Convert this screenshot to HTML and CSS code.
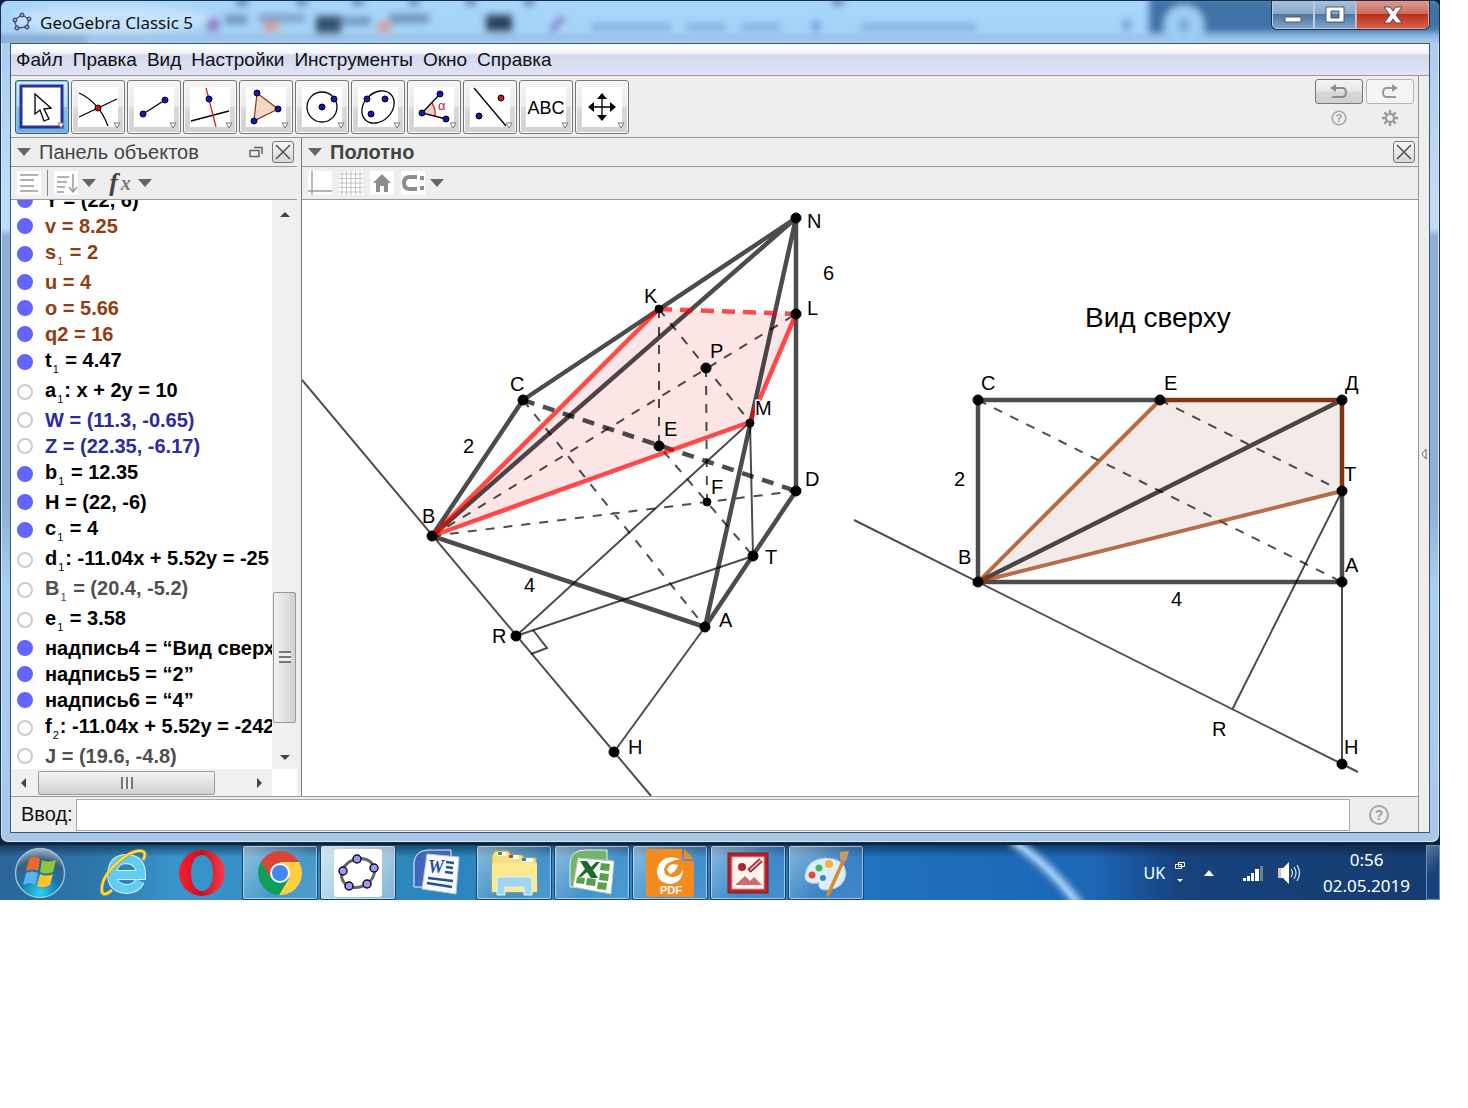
FILE: index.html
```html
<!DOCTYPE html>
<html lang="ru">
<head>
    <meta charset="UTF-8">
    <meta name="viewport" content="width=device-width, initial-scale=1.0">
    <title>GeoGebra Classic 5</title>
    <link rel="stylesheet" href="styles.css">
</head>
<body>
    <div class="desktop">
        <div class="window">
            <header class="titlebar">
                <!-- Blurred windows behind the glass -->
                <svg class="glass" viewBox="0 0 1438 42" preserveAspectRatio="none" aria-hidden="true">
                    <defs>
                        <filter id="soft" x="-20%" y="-50%" width="140%" height="200%"><feGaussianBlur stdDeviation="3.5"/></filter>
                        <linearGradient id="sky" x1="0" y1="0" x2="0" y2="1">
                            <stop offset="0" stop-color="#a9d6fb"/><stop offset="0.7" stop-color="#a5d3f8"/><stop offset="0.85" stop-color="#9fc4ea"/><stop offset="1" stop-color="#a6c8ec"/>
                        </linearGradient>
                    </defs>
                    <rect width="1438" height="42" fill="url(#sky)"/>
                    <g filter="url(#soft)">
                        <ellipse cx="110" cy="18" rx="100" ry="14" fill="#c4e2fb"/>
                        <rect x="-5" y="36" width="90" height="6" fill="#7d9fc5"/>
                        <rect x="1148" y="-4" width="300" height="36" fill="#3f72a8"/>
                        <circle cx="1183" cy="24" r="20" fill="#9dcdf5"/>
                        <ellipse cx="1183" cy="24" rx="5" ry="6" fill="#6c9fd0"/>
                        <ellipse cx="212" cy="24" rx="7" ry="7" fill="#8a7fc0"/>
                        <ellipse cx="270" cy="25" rx="8" ry="6" fill="#d69f9c"/>
                        <ellipse cx="383" cy="26" rx="7" ry="6" fill="#d69f9c"/>
                        <rect x="224" y="14" width="22" height="9" fill="#6f93b8"/>
                        <rect x="258" y="13" width="46" height="8" fill="#7fa1c2"/>
                        <rect x="315" y="15" width="25" height="17" fill="#35526f"/>
                        <rect x="340" y="16" width="30" height="8" fill="#6f93b8"/>
                        <rect x="388" y="13" width="40" height="9" fill="#6f93b8"/>
                        <rect x="485" y="14" width="26" height="16" fill="#2c435c"/>
                        <path d="M550 30l12-14" stroke="#7b78c4" stroke-width="5"/>
                        <path d="M590 26H670M685 26H725M740 26H780M860 26H975" stroke="#82afe0" stroke-width="7"/>
                        <ellipse cx="815" cy="25" rx="4" ry="6" fill="#6b96cf"/>
                        <ellipse cx="1126" cy="24" rx="4" ry="6" fill="#6b96cf"/>
                        <path d="M235 1h12M296 1h10M352 1h10M408 1h10M465 1h10M523 1h10M832 1h10" stroke="#4b72b0" stroke-width="6"/>
                    </g>
                </svg>
                <div class="title">
                    <svg width="20" height="20" viewBox="0 0 20 20" aria-hidden="true">
                        <path d="M10 3L17 7L15 15L5 16L2 8Z" fill="none" stroke="#555" stroke-width="1.3" stroke-linejoin="round"/>
                        <g fill="#9a9aff" stroke="#223" stroke-width="0.9"><circle cx="10" cy="3" r="2"/><circle cx="17" cy="7" r="2"/><circle cx="15" cy="15" r="2"/><circle cx="5" cy="16" r="2"/><circle cx="3" cy="8" r="2"/></g>
                    </svg>
                    <h1>GeoGebra Classic 5</h1>
                </div>
                <div class="window-buttons">
                    <button class="win-btn" aria-label="Свернуть"><svg width="20" height="18" viewBox="0 0 20 18"><rect x="2" y="11" width="16" height="5" rx="1" fill="#fff" stroke="#455870"/></svg></button>
                    <button class="win-btn" aria-label="Развернуть"><svg width="20" height="18" viewBox="0 0 20 18"><path d="M1 1h18v15H1zM6 5v7h8V5z" fill="#fff" fill-rule="evenodd" stroke="#455870"/></svg></button>
                    <button class="win-btn win-close" aria-label="Закрыть"><svg width="20" height="18" viewBox="0 0 20 18"><path d="M1 1h6l3 4 3-4h6l-6 8 6 8h-6l-3-4-3 4H1l6-8z" fill="#fff" stroke="#60424a"/></svg></button>
                </div>
            </header>

            <div class="client">
                <nav class="menubar">
                    <a href="#">Файл</a>
                    <a href="#">Правка</a>
                    <a href="#">Вид</a>
                    <a href="#">Настройки</a>
                    <a href="#">Инструменты</a>
                    <a href="#">Окно</a>
                    <a href="#">Справка</a>
                </nav>

                <div class="work">
                    <main class="main">
                        <div class="toolbar">
                            <div class="tools">
                                <button class="tool tool-active" aria-label="Перемещать"><svg viewBox="0 0 54 54"><rect x="6" y="6" width="41" height="41" fill="#fff" stroke="#28309c" stroke-width="3"/><path d="M20 14V34L25 30L29 41L34 39L29 29L36 28Z" fill="#fff" stroke="#000" stroke-width="1.3"/><path class="more" d="M43 43h6l-3 5z"/></svg></button>
                                <button class="tool" aria-label="Точка"><svg viewBox="0 0 54 54"><rect class="paper" x="7" y="7" width="40" height="40"/><path class="ink" d="M8 13Q28 22 37 46M8 37L46 19"/><circle class="red-dot" cx="27" cy="28" r="3"/><path class="more" d="M43 43h6l-3 5z"/></svg></button>
                                <button class="tool" aria-label="Отрезок"><svg viewBox="0 0 54 54"><rect class="paper" x="7" y="7" width="40" height="40"/><path class="ink" d="M16 34L38 20"/><circle class="blue-dot" cx="16" cy="34" r="3"/><circle class="blue-dot" cx="38" cy="20" r="3"/><path class="more" d="M43 43h6l-3 5z"/></svg></button>
                                <button class="tool" aria-label="Перпендикуляр"><svg viewBox="0 0 54 54"><rect class="paper" x="7" y="7" width="40" height="40"/><path class="ink" d="M8 41L46 31"/><path d="M23 8L33 47" stroke="#e02020" stroke-width="1.3"/><circle class="blue-dot" cx="26" cy="19" r="3"/><path class="more" d="M43 43h6l-3 5z"/></svg></button>
                                <button class="tool" aria-label="Многоугольник"><svg viewBox="0 0 54 54"><rect class="paper" x="7" y="7" width="40" height="40"/><path d="M18 13L39 29L15 41Z" fill="#f3d6c8" stroke="#993300" stroke-width="1.2"/><circle class="blue-dot" cx="18" cy="13" r="3"/><circle class="blue-dot" cx="39" cy="29" r="3"/><circle class="blue-dot" cx="15" cy="41" r="3"/><path class="more" d="M43 43h6l-3 5z"/></svg></button>
                                <button class="tool" aria-label="Окружность"><svg viewBox="0 0 54 54"><rect class="paper" x="7" y="7" width="40" height="40"/><circle class="ink" cx="27" cy="27" r="15"/><circle class="blue-dot" cx="27" cy="27" r="3"/><circle class="blue-dot" cx="39" cy="19" r="3"/><path class="more" d="M43 43h6l-3 5z"/></svg></button>
                                <button class="tool" aria-label="Эллипс"><svg viewBox="0 0 54 54"><rect class="paper" x="7" y="7" width="40" height="40"/><ellipse class="ink" cx="27" cy="27" rx="18" ry="14" transform="rotate(-45 27 27)"/><circle class="blue-dot" cx="16" cy="19" r="3"/><circle class="blue-dot" cx="34" cy="19" r="3"/><circle class="blue-dot" cx="20" cy="34" r="3"/><path class="more" d="M43 43h6l-3 5z"/></svg></button>
                                <button class="tool" aria-label="Угол"><svg viewBox="0 0 54 54"><rect class="paper" x="7" y="7" width="40" height="40"/><path d="M15 33L25 23Q29 29 28 37Z" fill="#f9cccc"/><path d="M25 23Q29 29 28 37" fill="none" stroke="#d01818" stroke-width="1.3"/><path class="ink" d="M33 14L15 33L39 39"/><circle class="blue-dot" cx="33" cy="14" r="3"/><circle class="blue-dot" cx="15" cy="33" r="3"/><circle class="blue-dot" cx="39" cy="39" r="3"/><text class="alpha" x="31" y="30">α</text><path class="more" d="M43 43h6l-3 5z"/></svg></button>
                                <button class="tool" aria-label="Отражение"><svg viewBox="0 0 54 54"><rect class="paper" x="7" y="7" width="40" height="40"/><path class="ink" d="M11 8L43 46"/><circle class="blue-dot" cx="16" cy="36" r="3"/><circle class="red-dot" cx="38" cy="18" r="3"/><path class="more" d="M43 43h6l-3 5z"/></svg></button>
                                <button class="tool" aria-label="Текст"><svg viewBox="0 0 54 54"><rect class="paper" x="7" y="7" width="40" height="40"/><text class="abc" x="27" y="34" text-anchor="middle">ABC</text><path class="more" d="M43 43h6l-3 5z"/></svg></button>
                                <button class="tool" aria-label="Переместить полотно"><svg viewBox="0 0 54 54"><rect class="paper" x="7" y="7" width="40" height="40"/><path class="ink" d="M27 16V38M16 27H38"/><path d="M27 13l5 6H22zM27 41l5-6H22zM13 27l6-5v10zM41 27l-6-5v10z"/><path class="more" d="M43 43h6l-3 5z"/></svg></button>
                            </div>
                            <div class="quick">
                                <button class="undo" aria-label="Отменить"><svg width="20" height="16" viewBox="0 0 20 16"><path d="M4 4H13Q17 4 17 8.5T13 13H3" fill="none" stroke="#8c8c8c" stroke-width="2"/><path d="M7 0V8L1 4z" fill="#8c8c8c"/></svg></button>
                                <button class="undo redo" aria-label="Вернуть"><svg width="20" height="16" viewBox="0 0 20 16"><path d="M15 4H7Q3 4 3 8.5T7 13H16" fill="none" stroke="#999" stroke-width="2"/><path d="M12 0V8L18 4z" fill="#999"/></svg></button>
                                <button class="plain" aria-label="Справка"><svg width="16" height="16" viewBox="0 0 20 20"><circle cx="10" cy="10" r="8.5" fill="none" stroke="#a6a6a6" stroke-width="2"/><text class="question" x="10" y="15" text-anchor="middle">?</text></svg></button>
                                <button class="plain" aria-label="Параметры"><svg width="16" height="16" viewBox="0 0 20 20"><g fill="none" stroke="#999"><circle cx="10" cy="10" r="5" stroke-width="2.5"/><path d="M10 0V4M10 16V20M0 10H4M16 10H20M3 3L6 6M14 14L17 17M3 17L6 14M14 6L17 3" stroke-width="3"/></g></svg></button>
                            </div>
                        </div>

                        <div class="views">
                            <section class="sidebar">
                                <div class="view-header">
                                    <span class="caret"></span>
                                    <h2 class="view-title">Панель объектов</h2>
                                    <button class="plain detach" aria-label="Открепить"><svg width="14" height="12" viewBox="0 0 14 12"><path d="M1 4.5h9v6H1zM5 1.5h8V8" fill="none" stroke="#666" stroke-width="1.5"/></svg></button>
                                    <button class="close" aria-label="Закрыть панель"><svg width="16" height="16" viewBox="0 0 16 16"><path d="M1 1L15 15M15 1L1 15" stroke="#555" stroke-width="1.6"/></svg></button>
                                </div>
                                <div class="stylebar">
                                    <button class="style-btn" aria-label="Вспомогательные объекты"><svg viewBox="0 0 24 24"><rect width="24" height="24" fill="#fff"/><path d="M3 4H21M3 9H17M3 15H17M3 20H21" stroke="#999" stroke-width="1.6"/></svg></button>
                                    <span class="divider"></span>
                                    <button class="style-btn" aria-label="Сортировка"><svg viewBox="0 0 24 24"><rect width="24" height="24" fill="#fff"/><path d="M3 6H15M3 11H13M3 16H11M3 21H10M19 3V20M15 16L19 21L23 16" fill="none" stroke="#999" stroke-width="1.5"/></svg></button>
                                    <span class="caret"></span>
                                    <button class="style-btn fx" aria-label="Описание"><i>f</i><i class="fx-small">x</i></button>
                                    <span class="caret"></span>
                                </div>
                                <div class="scroll-area">
                                    <div class="objects">
                                        <label class="object"><input type="checkbox" checked><span>Y = (22, 6)</span></label>
                                        <label class="object brown"><input type="checkbox" checked><span>v = 8.25</span></label>
                                        <label class="object indexed brown"><input type="checkbox" checked><span>s<sub>1</sub> = 2</span></label>
                                        <label class="object brown"><input type="checkbox" checked><span>u = 4</span></label>
                                        <label class="object brown"><input type="checkbox" checked><span>o = 5.66</span></label>
                                        <label class="object brown"><input type="checkbox" checked><span>q2 = 16</span></label>
                                        <label class="object indexed"><input type="checkbox" checked><span>t<sub>1</sub> = 4.47</span></label>
                                        <label class="object indexed"><input type="checkbox"><span>a<sub>1</sub>: x + 2y = 10</span></label>
                                        <label class="object blue"><input type="checkbox"><span>W = (11.3, -0.65)</span></label>
                                        <label class="object blue"><input type="checkbox"><span>Z = (22.35, -6.17)</span></label>
                                        <label class="object indexed"><input type="checkbox" checked><span>b<sub>1</sub> = 12.35</span></label>
                                        <label class="object"><input type="checkbox" checked><span>H = (22, -6)</span></label>
                                        <label class="object indexed"><input type="checkbox" checked><span>c<sub>1</sub> = 4</span></label>
                                        <label class="object indexed"><input type="checkbox"><span>d<sub>1</sub>: -11.04x + 5.52y = -25</span></label>
                                        <label class="object indexed gray"><input type="checkbox"><span>B<sub>1</sub> = (20.4, -5.2)</span></label>
                                        <label class="object indexed"><input type="checkbox"><span>e<sub>1</sub> = 3.58</span></label>
                                        <label class="object"><input type="checkbox" checked><span>надпись4 = “Вид сверху”</span></label>
                                        <label class="object"><input type="checkbox" checked><span>надпись5 = “2”</span></label>
                                        <label class="object"><input type="checkbox" checked><span>надпись6 = “4”</span></label>
                                        <label class="object indexed"><input type="checkbox"><span>f<sub>2</sub>: -11.04x + 5.52y = -242</span></label>
                                        <label class="object gray"><input type="checkbox"><span>J = (19.6, -4.8)</span></label>
                                    </div>
                                    <div class="scrollbar vertical">
                                        <span class="arrow up"></span>
                                        <span class="space-before"></span>
                                        <span class="thumb"><span class="grip"></span></span>
                                        <span class="space-after"></span>
                                        <span class="arrow down"></span>
                                    </div>
                                    <div class="scrollbar horizontal">
                                        <span class="arrow left"></span>
                                        <span class="thumb"><span class="grip"></span></span>
                                        <span class="space-after"></span>
                                        <span class="arrow right"></span>
                                    </div>
                                </div>
                            </section>

                            <section class="graphics">
                                <div class="view-header">
                                    <span class="caret"></span>
                                    <h2 class="view-title strong">Полотно</h2>
                                    <button class="close" aria-label="Закрыть полотно"><svg width="16" height="16" viewBox="0 0 16 16"><path d="M1 1L15 15M15 1L1 15" stroke="#555" stroke-width="1.6"/></svg></button>
                                </div>
                                <div class="stylebar">
                                    <button class="style-btn" aria-label="Оси"><svg viewBox="0 0 24 24"><rect width="24" height="24" fill="#fff"/><path d="M4 0V24M0 20H24" stroke="#999" stroke-width="1.3"/></svg></button>
                                    <button class="style-btn" aria-label="Сетка"><svg viewBox="0 0 24 24"><rect width="24" height="24" fill="#fff"/><path d="M3 0V24M7.500 0V24M12 0V24M16.500 0V24M21 0V24M0 3H24M0 7.500H24M0 12H24M0 16.500H24M0 21H24" stroke="#c4c4c4"/></svg></button>
                                    <button class="style-btn" aria-label="Исходный вид"><svg viewBox="0 0 24 24"><rect width="24" height="24" fill="#fff"/><path d="M12 3L21 12H18V21H14V15H10V21H6V12H3Z" fill="#8c8c8c"/></svg></button>
                                    <button class="style-btn" aria-label="Привязка"><svg viewBox="0 0 24 24"><rect width="24" height="24" fill="#fff"/><path d="M16 6H9Q3 6 3 12T9 18H16" fill="none" stroke="#8c8c8c" stroke-width="4"/><path d="M19 5h4v4h-4zM19 15h4v4h-4z" fill="#8c8c8c"/></svg></button>
                                    <span class="caret"></span>
                                </div>
                                <svg class="canvas" viewBox="302 200 1116 596" role="img" aria-label="Сечение пирамиды и вид сверху">
                                    <!-- Pyramid -->
                                    <path class="section" d="M432 536L659 309L796 314L750 422Z"/>
                                    <path class="thin" d="M302 380L651 796M516 636L750 422L753 556L516 636M705 627L614 752"/>
                                    <path class="thin" d="M533 630L547 648L531 654"/>
                                    <path class="dash" d="M659 309V446L753 556M659 309L750 422M432 536L796 314M706 368L707 502M523 400L705 627M432 536L796 491"/>
                                    <path class="thick-dash" d="M523 400L796 491"/>
                                    <path class="thick" d="M432 536L523 400L796 218L432 536L705 627L796 491V218L705 627"/>
                                    <path class="cut" d="M659 309L432 536L750 422L796 314"/>
                                    <path class="cut cut-dash" d="M659 309L796 314"/>
                                    <g class="points">
                                        <circle cx="796" cy="218" r="5"/><circle cx="796" cy="314" r="5"/><circle cx="659" cy="309" r="4"/>
                                        <circle cx="706" cy="368" r="5"/><circle cx="523" cy="400" r="5"/><circle cx="750" cy="423" r="4"/>
                                        <circle cx="659" cy="446" r="5"/><circle cx="796" cy="491" r="5"/><circle cx="707" cy="502" r="4"/>
                                        <circle cx="432" cy="536" r="5"/><circle cx="753" cy="556" r="5"/><circle cx="705" cy="627" r="5"/>
                                        <circle cx="516" cy="636" r="5"/><circle cx="614" cy="752" r="5"/>
                                    </g>
                                    <g class="names">
                                        <text x="807" y="228">N</text><text x="823" y="280">6</text><text x="644" y="303">K</text>
                                        <text x="807" y="315">L</text><text x="710" y="358">P</text><text x="510" y="391">C</text>
                                        <text class="halo" x="755" y="415">M</text><text x="463" y="453">2</text><text x="664" y="436">E</text>
                                        <text x="805" y="486">D</text><text x="711" y="494">F</text><text x="422" y="523">B</text>
                                        <text x="765" y="564">T</text><text x="524" y="592">4</text><text x="719" y="627">A</text>
                                        <text x="492" y="643">R</text><text x="628" y="754">H</text>
                                    </g>

                                    <!-- Top view -->
                                    <text class="caption" x="1085" y="327">Вид сверху</text>
                                    <path class="base" d="M978 582L1160 400H1342V491Z"/>
                                    <path class="thin" d="M854 520L1358 772M1342 491L1232 710M1342 582V764"/>
                                    <path class="dash" d="M978 400L1342 582M1160 400L1342 491"/>
                                    <path class="thick" d="M978 582V400H1342V582H978L1342 400"/>
                                    <path class="brown-line" d="M1160 400L978 582L1342 491"/>
                                    <path class="brown-dark" d="M1160 400H1342V491"/>
                                    <g class="points">
                                        <circle cx="978" cy="400" r="5"/><circle cx="1160" cy="400" r="5"/><circle cx="1342" cy="400" r="5"/>
                                        <circle cx="1342" cy="491" r="5"/><circle cx="978" cy="582" r="5"/><circle cx="1342" cy="582" r="5"/>
                                        <circle cx="1342" cy="764" r="5"/>
                                    </g>
                                    <g class="names">
                                        <text x="981" y="390">С</text><text x="1164" y="390">E</text><text x="1345" y="390">Д</text>
                                        <text x="954" y="486">2</text><text x="1344" y="481">T</text><text x="958" y="564">B</text>
                                        <text x="1345" y="572">A</text><text x="1171" y="606">4</text><text x="1212" y="736">R</text>
                                        <text x="1344" y="754">H</text>
                                    </g>
                                </svg>
                            </section>
                        </div>

                        <form class="inputbar">
                            <label for="command">Ввод:</label>
                            <input id="command" type="text">
                            <button class="plain" type="button" aria-label="Справка по вводу"><svg width="20" height="20" viewBox="0 0 20 20"><circle cx="10" cy="10" r="9" fill="none" stroke="#a6a6a6" stroke-width="2"/><text class="question" x="10" y="15" text-anchor="middle">?</text></svg></button>
                        </form>
                    </main>
                    <button class="perspectives" aria-label="Перспективы"><svg width="6" height="12" viewBox="0 0 6 12"><path d="M5 1V11L1 6Z" fill="#fff" stroke="#666"/></svg></button>
                </div>
            </div>
        </div>

        <footer class="taskbar">
            <svg class="streak" viewBox="0 0 1440 56" preserveAspectRatio="none" aria-hidden="true"><path d="M1012 -4Q1048 18 1080 62" fill="none" stroke="#a8d0f6" stroke-width="9" filter="url(#soft)"/><path d="M1018 0Q1048 20 1076 58" fill="none" stroke="#9cc9f5" stroke-width="4" opacity="0.6"/></svg>
            <button class="start" aria-label="Пуск">
                <svg width="52" height="52" viewBox="0 0 52 52">
                    <defs><radialGradient id="orb" cx="0.5" cy="0.9" r="0.9"><stop offset="0" stop-color="#28d2f4"/><stop offset="0.45" stop-color="#1674ad"/><stop offset="0.75" stop-color="#3d607c"/><stop offset="1" stop-color="#a4b8c6"/></radialGradient></defs>
                    <circle cx="26" cy="26" r="24.5" fill="url(#orb)" stroke="#8fc2de" stroke-width="1.5"/>
                    <path d="M15 12Q21 8 26 12L24 24Q19 21 12 24Z" fill="#ee6a2c"/>
                    <path d="M28 13Q34 16 42 13L39 25Q32 28 26 25Z" fill="#8dc63f"/>
                    <path d="M12 26Q18 23 24 26L21 38Q16 34 9 38Z" fill="#5fb2ec"/>
                    <path d="M26 27Q32 30 39 27L36 38Q29 42 23 39Z" fill="#fdc22d"/>
                </svg>
            </button>
            <div class="apps">
                <button class="app" aria-label="Internet Explorer">
                    <svg width="48" height="48" viewBox="0 0 48 48"><path d="M40 32Q36 40 27 40Q12 39 12 25Q13 10 27 10Q41 11 41 26H16" fill="none" stroke="#d4f5ff" stroke-width="10"/><path d="M40 32Q36 40 27 40Q12 39 12 25Q13 10 27 10Q41 11 41 26H16" fill="none" stroke="#62cdf3" stroke-width="8"/><path d="M12 41Q4 48 2 43Q0 29 18 13Q36 -2 44 3Q46 6 43 11" fill="none" stroke="#d5a51c" stroke-width="3.5"/><path d="M12 41Q4 48 2 43Q0 29 18 13Q36 -2 44 3Q46 6 43 11" fill="none" stroke="#ffe04b" stroke-width="2"/></svg>
                </button>
                <button class="app" aria-label="Opera">
                    <svg width="48" height="48" viewBox="0 0 48 48"><defs><linearGradient id="opera"><stop offset="0" stop-color="#ff1b2d"/><stop offset="0.5" stop-color="#c4121f"/><stop offset="1" stop-color="#fa3d48"/></linearGradient></defs><path d="M24 1A23 23 0 1 0 24 47A23 23 0 1 0 24 1ZM24 6C31 6 35 14 35 24S31 42 24 42S13 34 13 24S17 6 24 6Z" fill="url(#opera)" fill-rule="evenodd"/></svg>
                </button>
                <button class="app open" aria-label="Google Chrome">
                    <svg width="48" height="48" viewBox="0 0 48 48"><path d="M5 13A22 22 0 0 1 43 13H24L14 30Z" fill="#db4437"/><path d="M43 13A22 22 0 0 1 23 46L33 29L24 13Z" fill="#ffcd40"/><path d="M5 13A22 22 0 0 0 23 46L33 29H15Z" fill="#0f9d58"/><circle cx="24" cy="24" r="10" fill="#fff"/><circle cx="24" cy="24" r="8" fill="#4285f4"/></svg>
                </button>
                <button class="app open current" aria-label="GeoGebra">
                    <svg width="48" height="48" viewBox="0 0 48 48"><rect width="48" height="48" rx="3" fill="#fff"/><ellipse cx="24" cy="24" rx="17" ry="14" fill="none" stroke="#666" stroke-width="3" transform="rotate(-25 24 24)"/><g fill="#9999ff" stroke="#111" stroke-width="1.5"><circle cx="23" cy="10" r="4"/><circle cx="40" cy="19" r="4"/><circle cx="33" cy="35" r="4"/><circle cx="15" cy="37" r="4"/><circle cx="9" cy="22" r="4"/></g></svg>
                </button>
                <button class="app" aria-label="Word">
                    <svg width="48" height="48" viewBox="0 0 48 48"><path d="M2 38V14Q3 1 17 1H39V38Z" fill="#3f68bb" stroke="#e8f1fb"/><path d="M15 5L47 8L44 45L10 40Z" fill="#f8fbff" stroke="#b5c6df"/><text class="word" x="16" y="24">W</text><path d="M34 13l8 1M34 18l7 1M33 23l8 1M16 29l25 3M15 34l25 4" stroke="#27509b" stroke-width="2.5"/></svg>
                </button>
                <button class="app open" aria-label="Проводник">
                    <svg width="48" height="48" viewBox="0 0 48 48"><path d="M2 43V7L5 2H18L21 6H32L34 9H46L47 43Z" fill="#f5df83" stroke="#caa642"/><path d="M7 3h9v4H7zM19 6h10v4H19zM32 9h11v4H32z" fill="#fff"/><path d="M8 3h4v3H8z" fill="#4a9a3e"/><path d="M19 6h4v3h-4z" fill="#c93c36"/><path d="M32 9h4v3h-4z" fill="#2c83c4"/><path d="M2 14H47V43H2Z" fill="#fbe88f"/><path d="M7 46V30Q7 28 10 28H39Q42 28 42 30V46H34V38H15V46Z" fill="#a2d6ef" stroke="#e3f6ff"/></svg>
                </button>
                <button class="app open" aria-label="Excel">
                    <svg width="48" height="48" viewBox="0 0 48 48"><path d="M2 38V14Q3 1 17 1H39V38Z" fill="#78b36b" stroke="#e6f5e2"/><path d="M10 9L46 12L43 45L5 38Z" fill="#fbfff9" stroke="#b6cfae"/><path d="M33 14l9 1-1 7-9-1zM32 24l9 1-1 7-9-1zM9 28l8 1-1 6-8-1zM19 29l9 1-1 7-9-1zM30 33l9 1-1 7-9-1z" fill="#5b9f4c"/><path d="M12 12h7l4 6 5-5h4l-7 8 5 8h-7l-4-6-6 5h-3l7-8z" fill="#1d6a2c"/></svg>
                </button>
                <button class="app open" aria-label="Foxit PDF">
                    <svg width="48" height="48" viewBox="0 0 48 48"><path d="M0 0H36V12H48V48H0Z" fill="#f58a1f"/><path d="M38 0L48 10H38Z" fill="#f58a1f"/><path d="M34 10Q16 4 11 20Q10 34 25 35Q37 33 37 20Q34 28 27 28Q18 28 18 20Q20 12 34 10Z" fill="#fff"/><path d="M21 21Q23 13 32 16Q30 23 24 25Z" fill="#fff"/><text class="pdf" x="25" y="45" text-anchor="middle">PDF</text></svg>
                </button>
                <button class="app open" aria-label="Picture Manager">
                    <svg width="48" height="48" viewBox="0 0 48 48"><rect x="4" y="4" width="40" height="40" fill="#b3242c" stroke="#861820"/><rect x="8" y="8" width="32" height="32" fill="#fff4f0" stroke="#e59595"/><circle cx="18" cy="18" r="4" fill="#b3242c"/><path d="M11 36L21 27L26 32L30 28L38 36Z" fill="#cc6d6c"/><path d="M25 22L37 11" stroke="#982029" stroke-width="5"/><path d="M26 21L37 11" stroke="#e6a3a0" stroke-width="2"/></svg>
                </button>
                <button class="app open" aria-label="Paint">
                    <svg width="48" height="48" viewBox="0 0 48 48"><path d="M3 26Q5 10 23 9Q43 9 44 24Q43 39 26 41Q15 42 17 34Q7 36 3 30Z" fill="#dceef8" stroke="#9cc6de"/><circle cx="10" cy="26" r="3.5" fill="#df4a3c"/><circle cx="17" cy="19" r="3.5" fill="#4cb85a"/><circle cx="27" cy="15" r="4" fill="#f4b13d"/><circle cx="21" cy="29" r="3" fill="#3687c5"/><path d="M42 10L26 46" stroke="#d98a35" stroke-width="3.5" stroke-linecap="round"/><path d="M38 3L47 2L44 12L38 11Z" fill="#c79a63"/></svg>
                </button>
            </div>
            <div class="tray">
                <span class="lang">UK</span>
                <svg width="10" height="24" viewBox="0 0 10 24"><path d="M3.5 1.5h6v4h-6zM0.5 3.5h6v4h-6z" fill="none" stroke="#fff"/><path d="M2 18h6l-3 3z" fill="#fff"/></svg>
                <button class="plain tray-up" aria-label="Скрытые значки"><svg width="12" height="8" viewBox="0 0 12 8"><path d="M6 1L11 7H1Z" fill="#fff"/></svg></button>
                <svg class="signal" width="20" height="18" viewBox="0 0 20 18"><path d="M0 14h3v3H0zM4 12h3v5H4zM8 9h3v8H8zM12 5h4v12h-4z" fill="#fff"/><path d="M17 2h3v15h-3z" fill="#6b7f96"/></svg>
                <svg width="24" height="24" viewBox="0 0 24 24"><path d="M1 7H6L12 1V23L6 17H1Z" fill="#fff"/><path d="M1 7h3v10H1z" fill="#d8c3ad"/><path d="M14 8Q17 12 14 16M17 6Q21 12 17 18M20 4Q25 12 20 20" fill="none" stroke="#dce8f5" stroke-width="1.2"/></svg>
                <time class="clock" datetime="2019-05-02T00:56"><span>0:56</span><span>02.05.2019</span></time>
                <button class="show-desktop" aria-label="Показать рабочий стол"></button>
            </div>
        </footer>
    </div>
</body>
</html>
```

FILE: styles.css
```css
* {
    box-sizing: border-box;
}

body {
    margin: 0;
    background: #fff;
    font-family: "Liberation Sans", Arial, sans-serif;
    font-size: 20px;
    color: #111;
}

button {
    padding: 0;
    font: inherit;
    cursor: pointer;
}

svg {
    display: block;
}

.desktop {
    margin-right: 28px;
    background: #0e2238;
}

/* Window frame */
.window {
    position: relative;
    padding: 0 9px 9px;
    border: 1px solid #1b2f4a;
    border-radius: 8px;
    background: linear-gradient(#a6c8ec, #bfdcf7 22%, #bfdcf7 27%, #8fb0d8 28%, #8fb0d8 60%, #a9cff2 70%, #a8c8ea);
    box-shadow: inset 0 0 0 1px #d5e8fa;
    overflow: hidden;
}

.titlebar {
    display: flex;
    justify-content: space-between;
    align-items: flex-start;
    height: 42px;
}

.glass {
    position: absolute;
    top: 0;
    left: 0;
    width: 100%;
    height: 42px;
}

.title {
    position: relative;
    display: flex;
    align-items: center;
    gap: 8px;
    height: 42px;
    padding-left: 2px;
}

.title h1 {
    margin: 0;
    font-family: "Noto Sans", sans-serif;
    font-size: 17px;
    font-weight: 400;
}

.window-buttons {
    position: relative;
    display: flex;
    border: 1px solid #1d2f49;
    border-top: 0;
    border-radius: 0 0 6px 6px;
    overflow: hidden;
}

.win-btn {
    display: grid;
    place-items: center;
    width: 42px;
    height: 28px;
    border: 1px solid #b9cde4;
    border-top: 0;
    background: linear-gradient(#a9bfd8, #8ba8c8 48%, #4f749f 50%, #7fa3cb);
}

.win-close {
    width: 73px;
    border-color: #e2a69c;
    background: linear-gradient(#dc9a8f, #cc6a5c 48%, #b9301d 50%, #d8604a);
}

.client {
    border: 1px solid #43566f;
    background: #eee;
}

.menubar {
    display: flex;
    align-items: center;
    gap: 10px;
    height: 32px;
    padding-left: 5px;
    border-bottom: 1px solid #9a9a9a;
    background: linear-gradient(#fff, #f4f6fb 28%, #d3daee 36%, #e2e4f6);
    font-size: 19px;
}

.menubar a {
    color: #111;
    text-decoration: none;
}

.work {
    display: flex;
}

.main {
    flex: 1;
    min-width: 0;
}

/* Toolbar */
.toolbar {
    display: flex;
    justify-content: space-between;
    padding: 3px 4px;
    height: 62px;
    border-bottom: 1px solid #999;
}

.tools {
    display: flex;
    align-items: center;
    gap: 2px;
}

.tool {
    width: 54px;
    height: 54px;
    border: 1px solid #777;
    border-radius: 3px;
    background: linear-gradient(#f4f4f4, #ebebeb 49%, #dadada 51%, #d2d2d2);
    box-shadow: inset 0 0 0 1px #fafafa;
}

.tool svg {
    width: 54px;
    height: 54px;
    margin: -1px;
}

.tool-active {
    border-color: #2c628b;
    background: linear-gradient(#d5edfa, #b5dcf3 49%, #87c0e4 51%, #6cb0dc);
    box-shadow: inset 0 0 0 1px #8fc3e3;
}

.paper {
    fill: #fff;
}

.ink {
    fill: none;
    stroke: #000;
    stroke-width: 1.3px;
}

.blue-dot {
    fill: #1515c0;
    stroke: #000;
}

.red-dot {
    fill: #d01010;
    stroke: #000;
}

.more {
    fill: #fff;
    stroke: #777;
}

.abc {
    font-size: 18px;
}

.alpha {
    font-size: 13px;
    fill: #d01818;
}

.question {
    font-size: 14px;
    font-weight: 700;
    fill: #a0a0a0;
}

.quick {
    display: grid;
    grid-template-columns: 48px 48px;
    grid-template-rows: 25px 24px;
    gap: 2px 3px;
}

.undo {
    display: grid;
    place-items: center;
    border: 1px solid #777;
    border-radius: 3px;
    background: linear-gradient(#f4f4f4, #e8e8e8 49%, #d8d8d8 51%, #d0d0d0);
}

.redo {
    border-color: #b5b5b5;
    background: #f4f4f4;
}

.plain {
    display: grid;
    place-items: center;
    border: 0;
    background: none;
}

/* Views */
.views {
    display: flex;
}

.sidebar {
    flex: none;
    width: 286px;
    margin-right: 4px;
}

.graphics {
    flex: 1;
    min-width: 0;
    border-left: 1px solid #777;
}

.view-header {
    display: flex;
    align-items: center;
    height: 29px;
    padding: 0 3px 0 6px;
    border-bottom: 1px solid #999;
}

.view-title {
    flex: 1;
    margin: 0 0 0 8px;
    font-size: 20px;
    font-weight: 400;
    color: #444;
}

.strong {
    font-weight: 700;
}

.caret {
    border: 7px solid transparent;
    border-top: 8px solid #666;
    border-bottom: 0;
}

.detach {
    margin-right: 9px;
}

.close {
    display: grid;
    place-items: center;
    width: 22px;
    height: 22px;
    border: 1px solid #777;
    border-radius: 3px;
    background: linear-gradient(#f6f6f6, #d8d8d8);
}

.stylebar {
    display: flex;
    align-items: center;
    gap: 6px;
    height: 33px;
    padding: 0 6px;
    border-bottom: 1px solid #999;
}

.graphics .stylebar {
    gap: 7px;
}

.stylebar .caret {
    margin-left: -2px;
}

.style-btn {
    width: 24px;
    height: 24px;
    border: 0;
    background: none;
}

.fx {
    display: flex;
    align-items: center;
    justify-content: center;
    gap: 3px;
    margin: 0 2px 0 6px;
    font-family: "Liberation Serif", serif;
    font-size: 26px;
    font-weight: 700;
    line-height: 24px;
    color: #444;
}

.fx-small {
    font-size: 20px;
    color: #777;
}

.divider {
    width: 1px;
    height: 26px;
    background: #888;
}

/* Object list */
.scroll-area {
    display: grid;
    grid-template-columns: 1fr 25px;
    grid-template-rows: 569px 27px;
    background: #fff;
}

.objects {
    display: flex;
    flex-direction: column;
    justify-content: flex-end;
    overflow: hidden;
}

.object {
    display: flex;
    flex: none;
    align-items: center;
    gap: 12px;
    height: 26px;
    padding-left: 6px;
    font-weight: 700;
    line-height: 26px;
    color: #000;
    white-space: nowrap;
}

.indexed {
    height: 30px;
}

.indexed span {
    padding-bottom: 4px;
}

.object sub {
    padding: 0 1px;
    font-size: 11px;
    font-weight: 400;
    line-height: 0;
    vertical-align: -6px;
}

.object input {
    flex: none;
    appearance: none;
    width: 16px;
    height: 16px;
    margin: 0;
    border: 2px solid #ccc;
    border-radius: 50%;
    background: #fff;
}

.object input:checked {
    border-color: #6464ff;
    background: #6464ff;
}

.brown {
    color: #933c10;
}

.blue {
    color: #2b2b9e;
}

.gray {
    color: #505050;
}

.scrollbar {
    display: flex;
    align-items: center;
    background: #f0f0f0;
}

.vertical {
    flex-direction: column;
    padding: 12px 0 9px;
}

.horizontal {
    padding: 0 10px;
}

.thumb {
    display: grid;
    place-items: center;
    border: 1px solid #999;
    border-radius: 2px;
}

.vertical .thumb {
    width: 23px;
    height: 131px;
    background: linear-gradient(90deg, #f3f3f3, #e2e2e2 49%, #d0d0d0);
}

.horizontal .thumb {
    width: 177px;
    height: 24px;
    margin-left: 12px;
    background: linear-gradient(#f3f3f3, #e2e2e2 49%, #d0d0d0);
}

.grip {
    width: 12px;
    height: 12px;
}

.vertical .grip {
    background: repeating-linear-gradient(#777 0 2px, #eee 2px 5px);
}

.horizontal .grip {
    background: repeating-linear-gradient(90deg, #777 0 2px, #eee 2px 5px);
}

.space-before {
    flex: 370;
}

.space-after {
    flex: 32;
}

.arrow {
    border: 5px solid transparent;
}

.up {
    border-top: 0;
    border-bottom-color: #444;
}

.down {
    border-bottom: 0;
    border-top-color: #444;
}

.left {
    border-left: 0;
    border-right-color: #444;
}

.right {
    border-right: 0;
    border-left-color: #444;
}

/* Drawing */
.canvas {
    width: 100%;
    height: auto;
    background: #fff;
}

.section {
    fill: #fde5e6;
}

.base {
    fill: #f4ebe8;
}

.thin,
.dash,
.thick,
.thick-dash,
.cut,
.brown-line,
.brown-dark {
    fill: none;
    stroke: #000;
    stroke-opacity: 0.7;
    stroke-width: 2px;
}

.dash {
    stroke-dasharray: 9 9;
}

.thick,
.thick-dash {
    stroke-width: 4.5px;
    stroke-linejoin: round;
}

.thick-dash {
    stroke-dasharray: 12 9;
}

.cut {
    stroke: #f00;
    stroke-width: 4.5px;
}

.cut-dash {
    stroke-dasharray: 13 8;
}

.brown-line,
.brown-dark {
    stroke: #993300;
    stroke-width: 4px;
}

.brown-dark {
    stroke: #8a3208;
    stroke-opacity: 0.9;
}

.points {
    fill: #000;
    stroke: #000;
}

.names {
    font-size: 20px;
}

.halo {
    stroke: #fff;
    stroke-width: 3px;
    paint-order: stroke;
}

.caption {
    font-size: 28px;
}

/* Input line */
.inputbar {
    display: flex;
    align-items: center;
    height: 36px;
    padding: 0 11px 0 10px;
    border-top: 1px solid #999;
}

.inputbar label {
    width: 55px;
}

.inputbar input {
    flex: 1;
    min-width: 0;
    height: 32px;
    border: 1px solid #aaa;
    background: #fff;
    font: inherit;
}

.inputbar .plain {
    width: 57px;
}

.perspectives {
    display: grid;
    place-items: center;
    width: 11px;
    border: 0;
    border-left: 1px solid #999;
    background: #eee;
}

/* Taskbar */
.taskbar {
    position: relative;
    display: flex;
    height: 57px;
    border-top: 2px solid #0e2238;
    background:
        linear-gradient(rgba(10, 30, 60, 0.6), rgba(10, 30, 60, 0) 22%),
        linear-gradient(90deg, #2a6597, #2d78ad 7%, #3994cb 12%, #2c85bd 30%, #2f88cb 45%, #1f70bd 62%, #1c66b5 76%, #17427c 82%, #153c70);
}

.streak {
    position: absolute;
    top: 0;
    left: 0;
    width: 100%;
    height: 55px;
    overflow: hidden;
}

.start {
    display: grid;
    place-items: center;
    width: 80px;
    border: 0;
    background: none;
}

.apps {
    display: flex;
    flex: 1;
    gap: 2px;
    padding-left: 6px;
}

.app {
    display: grid;
    place-items: center;
    width: 76px;
    border: 1px solid transparent;
    background: none;
}

.open {
    border-color: #1a4265;
    border-radius: 3px;
    background: linear-gradient(135deg, rgba(255, 255, 255, 0.45), rgba(255, 255, 255, 0.1) 60%, rgba(255, 255, 255, 0.15));
    box-shadow: inset 0 0 0 1px rgba(220, 240, 255, 0.6);
}

.current {
    background: linear-gradient(135deg, rgba(255, 255, 255, 0.8), rgba(255, 255, 255, 0.4));
}

.word {
    font-family: "Liberation Serif", serif;
    font-size: 18px;
    font-weight: 700;
    font-style: italic;
    fill: #27509b;
}

.pdf {
    font-size: 11px;
    font-weight: 700;
    fill: #fff;
}

.tray {
    position: relative;
    display: flex;
    align-items: center;
    gap: 10px;
    font-family: "Noto Sans", sans-serif;
    font-size: 17px;
    color: #fff;
}

.lang {
    font-size: 16px;
}

.tray-up {
    margin: 0 18px 0 8px;
}

.signal {
    margin-right: 4px;
}

.clock {
    display: flex;
    flex-direction: column;
    align-items: center;
    margin: 0 6px 0 12px;
    line-height: 26px;
}

.show-desktop {
    align-self: stretch;
    width: 14px;
    border: 1px solid #6b8fb8;
    background: linear-gradient(135deg, #5b7799, #17427c 50%);
}
```
